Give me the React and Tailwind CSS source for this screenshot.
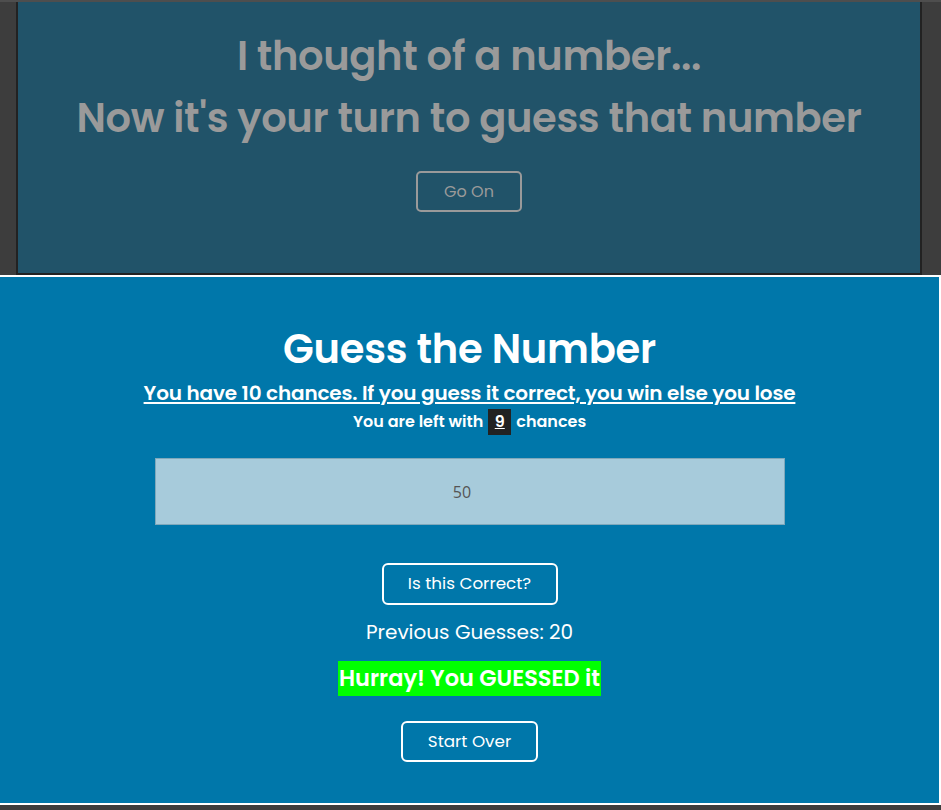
export default function App() {
    const font = { fontFamily: '"Poppins", "Open Sans", sans-serif' };

    return (
        <div
            className="w-[941px] h-[810px] bg-[#3d3d3d] border-t-2 border-[#4e4e4e] overflow-hidden"
            style={font}
        >
            <div className="ml-4 w-[906px] h-[273px] bg-[#215369] border-x-2 border-b-2 border-[#222222] flex flex-col items-center">
                <h2 className="mt-[23px] text-[40px] leading-[62px] font-semibold tracking-[-0.35px] text-[#9a9a9a] text-center">
                    I thought of a number...
                    <br />
                    Now it's your turn to guess that number
                </h2>
                <button className="mt-[22px] w-[106px] h-[41px] border-2 border-[#9a9a9a] rounded-[5px] text-[#9a9a9a] text-[16px]">
                    Go On
                </button>
            </div>

            <div className="w-[941px] h-[530px] bg-[#0077aa] border-y-2 border-r-2 border-white flex flex-col items-center text-white">
                <h1 className="mt-[48px] text-[40px] leading-[48px] font-semibold tracking-[-0.25px]">
                    Guess the Number
                </h1>
                <p className="mt-[7px] text-[20px] leading-[26px] font-semibold tracking-[-0.15px] underline underline-offset-2">
                    You have 10 chances. If you guess it correct, you win else you lose
                </p>
                <p className="mt-[2px] text-[16px] leading-[28px] font-semibold flex items-center gap-[5px]">
                    You are left with
                    <span className="bg-[#222222] w-[23px] text-center leading-[26px] underline">9</span>
                    chances
                </p>
                <input
                    type="number"
                    defaultValue="50"
                    className="mt-[22px] w-[630px] h-[67px] bg-[#a7cbdb] border border-[#7fa8bb] text-center text-[16px] text-[#555555] outline-none"
                    style={{ fontFamily: '"Open Sans", sans-serif' }}
                />
                <button className="mt-[38px] w-[176px] h-[42px] border-2 border-white rounded-[6px] text-[16.8px]">
                    Is this Correct?
                </button>
                <p className="mt-[14px] text-[20px] leading-[26px]">Previous Guesses: 20</p>
                <p className="mt-[16px] bg-[#00ff00] px-[1px] text-[22.5px] leading-[35px] font-semibold">
                    Hurray! You GUESSED it
                </p>
                <button className="mt-[25px] w-[137px] h-[41px] border-2 border-white rounded-[6px] text-[16.8px]">
                    Start Over
                </button>
            </div>
        </div>
    );
}
